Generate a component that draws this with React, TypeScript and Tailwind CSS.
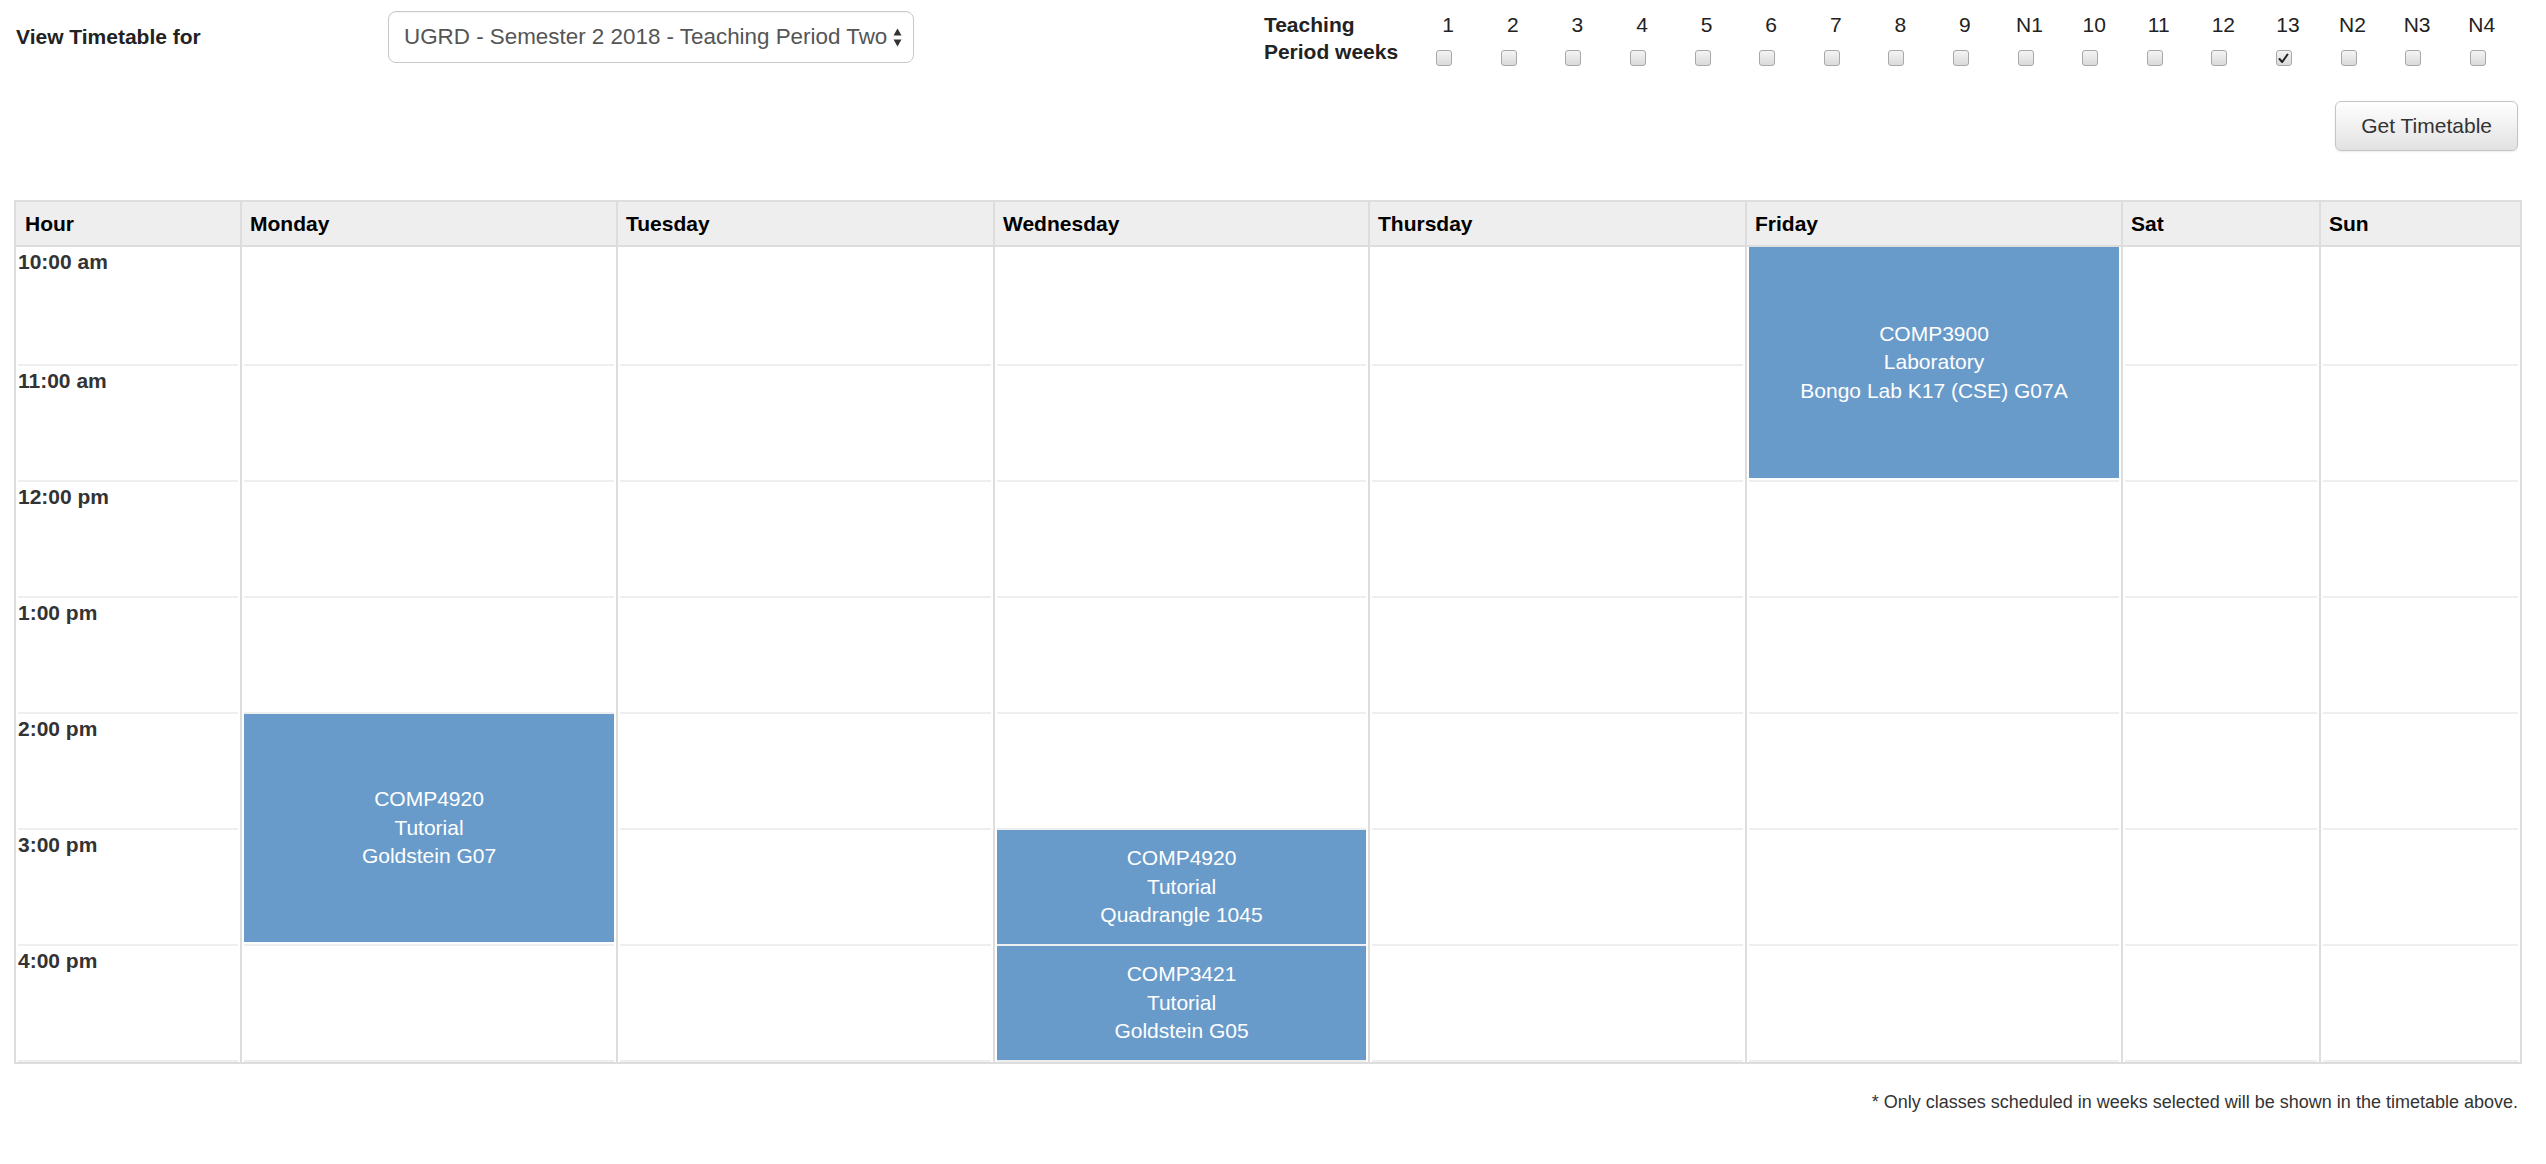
import React from 'react';

type Ev = { start: number; span: number; lines: string[] };
type Day = { name: string; events: Ev[] };

const hours = ['10:00 am', '11:00 am', '12:00 pm', '1:00 pm', '2:00 pm', '3:00 pm', '4:00 pm'];
// content height of each hour slot, a 2px line follows each one
const slotH = [117, 114, 114, 114, 114, 114, 114];

const weeks = ['1', '2', '3', '4', '5', '6', '7', '8', '9', 'N1', '10', '11', '12', '13', 'N2', 'N3', 'N4'];

const days: Day[] = [
  { name: 'Monday', events: [{ start: 4, span: 2, lines: ['COMP4920', 'Tutorial', 'Goldstein G07'] }] },
  { name: 'Tuesday', events: [] },
  {
    name: 'Wednesday',
    events: [
      { start: 5, span: 1, lines: ['COMP4920', 'Tutorial', 'Quadrangle 1045'] },
      { start: 6, span: 1, lines: ['COMP3421', 'Tutorial', 'Goldstein G05'] },
    ],
  },
  { name: 'Thursday', events: [] },
  { name: 'Friday', events: [{ start: 0, span: 2, lines: ['COMP3900', 'Laboratory', 'Bongo Lab K17 (CSE) G07A'] }] },
  { name: 'Sat', events: [] },
  { name: 'Sun', events: [] },
];

const spanHeight = (start: number, span: number) => {
  let h = 0;
  for (let i = start; i < start + span; i++) h += slotH[i];
  return h + 2 * (span - 1);
};

const Checkbox: React.FC<{ checked?: boolean }> = ({ checked }) => (
  <div className="w-[16px] h-[16px] rounded-[3px] border border-[#a8a8a8] bg-gradient-to-b from-[#f4f4f4] to-[#dadada] flex items-center justify-center">
    {checked && (
      <svg width="11" height="11" viewBox="0 0 11 11">
        <path d="M1.5 6 L4.2 9 L9.5 1.5" fill="none" stroke="#222" strokeWidth="2" strokeLinecap="round" strokeLinejoin="round" />
      </svg>
    )}
  </div>
);

const DayColumn: React.FC<{ day: Day }> = ({ day }) => {
  const segments: React.ReactNode[] = [];
  let i = 0;
  while (i < hours.length) {
    const ev = day.events.find((e) => e.start === i);
    if (ev) {
      segments.push(
        <div key={i} className="border-b-2 border-[#eee]" style={{ height: spanHeight(i, ev.span) + 2 }}>
          <div className={`h-full ${ev.span > 1 ? 'pb-[2px]' : ''}`}>
            <div className="h-full bg-[#699bca] text-white flex flex-col items-center justify-center leading-[28.5px] text-center">
              {ev.lines.map((l) => (
                <div key={l}>{l}</div>
              ))}
            </div>
          </div>
        </div>
      );
      i += ev.span;
    } else {
      segments.push(<div key={i} className="border-b-2 border-[#eee]" style={{ height: slotH[i] + 2 }} />);
      i += 1;
    }
  }
  return <div className="border-l-2 border-[#ddd] px-[2px] flex flex-col">{segments}</div>;
};

export default function App() {
  return (
    <div className="min-h-screen bg-white text-[21px] text-[#333] font-[family-name:'Liberation_Sans',Arial,sans-serif] pl-[14px] pr-[24px]">
      {/* Top controls */}
      <div className="flex h-[101px] pt-[11px]">
        <div className="w-[374px] pl-[2px] leading-[52px] font-bold text-[#222]">View Timetable for</div>
        <div className="w-[526px] h-[52px] border border-[#c8c8c8] rounded-[8px] bg-white shadow-[inset_0_1px_1px_rgba(0,0,0,0.05)] flex items-center pl-[15px] pr-[11px] text-[22.4px] text-[#555]">
          <span>UGRD - Semester 2 2018 - Teaching Period Two</span>
          <svg className="ml-auto" width="9" height="21" viewBox="0 0 9 21">
            <path d="M4.5 1.5 L8.5 8.5 L0.5 8.5 Z" fill="#333" />
            <path d="M4.5 19.5 L8.5 12.5 L0.5 12.5 Z" fill="#333" />
          </svg>
        </div>

        <div className="ml-auto mr-[8px] flex">
          <div className="w-[152px] font-bold leading-[27px] text-[#222]">
            <div>Teaching</div>
            <div>Period weeks</div>
          </div>
          {weeks.map((w) => (
            <div key={w} className="w-[64.6px] flex flex-col items-center">
              <div className="leading-[27px] text-[#222]">{w}</div>
              <div className="mt-[12px] -ml-[8px]">
                <Checkbox checked={w === '13'} />
              </div>
            </div>
          ))}
        </div>
      </div>

      <div className="flex justify-end">
        <button className="mr-[4px] h-[50px] px-[25px] rounded-[6px] border border-[#c4c4c4] bg-gradient-to-b from-white to-[#e2e2e2] text-[#333] shadow-[0_1px_2px_rgba(0,0,0,0.08)]">
          Get Timetable
        </button>
      </div>

      {/* Timetable */}
      <div className="mt-[49px] border-2 border-[#ddd] grid grid-cols-[224px_376px_377px_375px_377px_376px_198px_201px]">
        <div className="h-[45px] bg-[#eee] border-b-2 border-[#ddd] pl-[9px] flex items-center font-bold text-black">Hour</div>
        {days.map((d) => (
          <div key={d.name} className="h-[45px] bg-[#eee] border-b-2 border-l-2 border-[#ddd] pl-[8px] flex items-center font-bold text-black">
            {d.name}
          </div>
        ))}

        <div className="px-[2px] flex flex-col">
          {hours.map((h, i) => (
            <div key={h} className="border-b-2 border-[#eee] font-bold leading-[30px] text-[#333]" style={{ height: slotH[i] + 2 }}>
              {h}
            </div>
          ))}
        </div>
        {days.map((d) => (
          <DayColumn key={d.name} day={d} />
        ))}
      </div>

      <div className="mt-[25px] pr-[4px] text-right text-[18px] leading-[26px] text-[#333]">
        * Only classes scheduled in weeks selected will be shown in the timetable above.
      </div>
    </div>
  );
}
